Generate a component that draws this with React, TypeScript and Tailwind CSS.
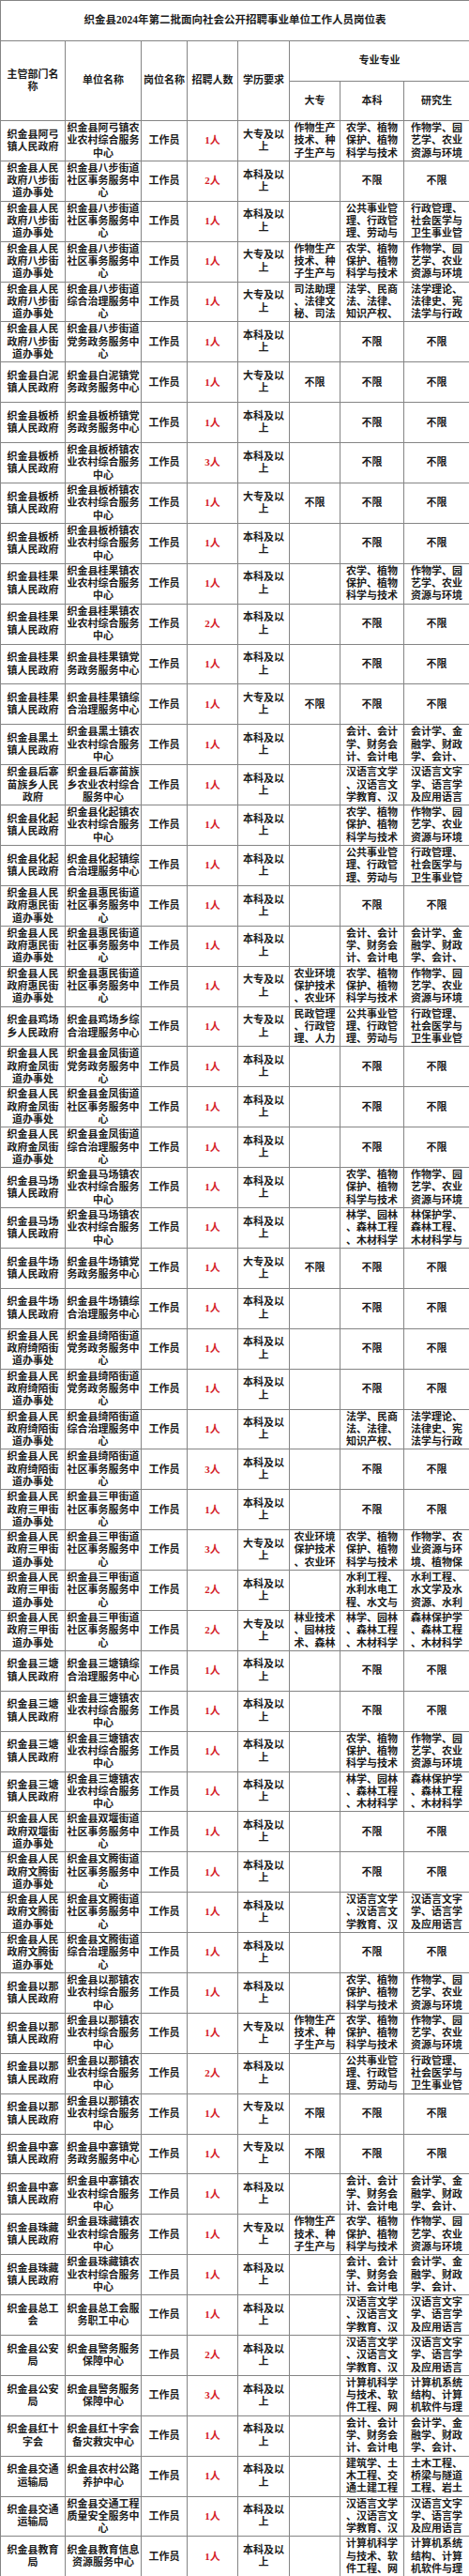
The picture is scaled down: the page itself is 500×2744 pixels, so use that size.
const BX = "不限";

// 专业 groups: [大专, 本科, 研究生]
const NX_D = "作物生产\n技术、种\n子生产与";
const NX_B = "农学、植物\n保护、植物\n科学与技术";
const NX_G = "作物学、园\n艺学、农业\n资源与环境";
const GG_D = "民政管理\n、行政管\n理、人力";
const GG_B = "公共事业管\n理、行政管\n理、劳动与";
const GG_G = "行政管理、\n社会医学与\n卫生事业管";
const FX_D = "司法助理\n、法律文\n秘、司法";
const FX_B = "法学、民商\n法、法律、\n知识产权、";
const FX_G = "法学理论、\n法律史、宪\n法学与行政";
const KJ_B = "会计、会计\n学、财务会\n计、会计电";
const KJ_G = "会计学、金\n融学、财政\n学、会计、";
const HY_B = "汉语言文学\n、汉语言文\n学教育、汉";
const HY_G = "汉语言文字\n学、语言学\n及应用语言";
const NH_D = "农业环境\n保护技术\n、农业环";
const SJ_G = "作物学、农\n业资源与环\n境、植物保";
const LX_B = "林学、园林\n、森林工程\n、木材科学";
const LX_G1 = "林保护学、\n森林工程、\n木材科学与";
const LX_G2 = "森林保护学\n、森林工程\n、木材科学";
const LY_D = "林业技术\n、园林技\n术、森林";
const SL_B = "水利工程、\n水利水电工\n程、水文与";
const SL_G = "水利工程、\n水文学及水\n资源、水利";
const JS_B = "计算机科学\n与技术、软\n件工程、网";
const JS_G = "计算机系统\n结构、计算\n机软件与理";
const TM_B = "建筑学、土\n木工程、交\n通土建工程";
const TM_G = "土木工程、\n桥梁与隧道\n工程、岩土";

const town = (t: string) => `织金县${t}\n镇人民政府`;
const street = (t: string) => `织金县人民\n政府${t}街\n道办事处`;
const nongye = (t: string) => `织金县${t}镇农\n业农村综合服务\n中心`;
const shequ = (t: string) => `织金县${t}街道\n社区事务服务中\n心`;
const zongzhi = (t: string) => `织金县${t}街道\n综合治理服务中\n心`;
const dangwu = (t: string) => `织金县${t}街道\n党务政务服务中\n心`;
const zhenDang = (t: string) => `织金县${t}镇党\n务政务服务中心`;
const zhenZong = (t: string) => `织金县${t}镇综\n合治理服务中心`;

const DZ = "大专及以\n上";
const BK = "本科及以\n上";

type Row = [string, string, number, string, string, string, string];

const rows: Row[] = [
  [town("阿弓"), nongye("阿弓"), 1, DZ, NX_D, NX_B, NX_G],
  [street("八步"), shequ("八步"), 2, BK, "", BX, BX],
  [street("八步"), shequ("八步"), 1, BK, "", GG_B, GG_G],
  [street("八步"), shequ("八步"), 1, DZ, NX_D, NX_B, NX_G],
  [street("八步"), zongzhi("八步"), 1, DZ, FX_D, FX_B, FX_G],
  [street("八步"), dangwu("八步"), 1, BK, "", BX, BX],
  [town("白泥"), zhenDang("白泥"), 1, DZ, BX, BX, BX],
  [town("板桥"), zhenDang("板桥"), 1, BK, "", BX, BX],
  [town("板桥"), nongye("板桥"), 3, BK, "", BX, BX],
  [town("板桥"), nongye("板桥"), 1, DZ, BX, BX, BX],
  [town("板桥"), nongye("板桥"), 1, BK, "", BX, BX],
  [town("桂果"), nongye("桂果"), 1, BK, "", NX_B, NX_G],
  [town("桂果"), nongye("桂果"), 2, BK, "", BX, BX],
  [town("桂果"), zhenDang("桂果"), 1, BK, "", BX, BX],
  [town("桂果"), zhenZong("桂果"), 1, DZ, BX, BX, BX],
  [town("黑土"), nongye("黑土"), 1, BK, "", KJ_B, KJ_G],
  ["织金县后寨\n苗族乡人民\n政府", "织金县后寨苗族\n乡农业农村综合\n服务中心", 1, BK, "", HY_B, HY_G],
  [town("化起"), nongye("化起"), 1, BK, "", NX_B, NX_G],
  [town("化起"), zhenZong("化起"), 1, BK, "", GG_B, GG_G],
  [street("惠民"), shequ("惠民"), 1, BK, "", BX, BX],
  [street("惠民"), shequ("惠民"), 1, BK, "", KJ_B, KJ_G],
  [street("惠民"), shequ("惠民"), 1, DZ, NH_D, NX_B, NX_G],
  ["织金县鸡场\n乡人民政府", "织金县鸡场乡综\n合治理服务中心", 1, DZ, GG_D, GG_B, GG_G],
  [street("金凤"), dangwu("金凤"), 1, BK, "", BX, BX],
  [street("金凤"), shequ("金凤"), 1, BK, "", BX, BX],
  [street("金凤"), zongzhi("金凤"), 1, BK, "", BX, BX],
  [town("马场"), nongye("马场"), 1, BK, "", NX_B, NX_G],
  [town("马场"), nongye("马场"), 1, BK, "", LX_B, LX_G1],
  [town("牛场"), zhenDang("牛场"), 1, DZ, BX, BX, BX],
  [town("牛场"), zhenZong("牛场"), 1, BK, "", BX, BX],
  [street("绮陌"), dangwu("绮陌"), 1, BK, "", BX, BX],
  [street("绮陌"), dangwu("绮陌"), 1, BK, "", BX, BX],
  [street("绮陌"), zongzhi("绮陌"), 1, BK, "", FX_B, FX_G],
  [street("绮陌"), shequ("绮陌"), 3, BK, "", BX, BX],
  [street("三甲"), shequ("三甲"), 1, BK, "", BX, BX],
  [street("三甲"), shequ("三甲"), 3, DZ, NH_D, NX_B, SJ_G],
  [street("三甲"), shequ("三甲"), 2, BK, "", SL_B, SL_G],
  [street("三甲"), shequ("三甲"), 2, DZ, LY_D, LX_B, LX_G2],
  [town("三塘"), zhenZong("三塘"), 1, BK, "", BX, BX],
  [town("三塘"), nongye("三塘"), 1, BK, "", BX, BX],
  [town("三塘"), nongye("三塘"), 1, BK, "", NX_B, NX_G],
  [town("三塘"), nongye("三塘"), 1, BK, "", LX_B, LX_G2],
  [street("双堰"), shequ("双堰"), 1, BK, "", BX, BX],
  [street("文腾"), shequ("文腾"), 1, BK, "", BX, BX],
  [street("文腾"), shequ("文腾"), 1, BK, "", HY_B, HY_G],
  [street("文腾"), zongzhi("文腾"), 1, BK, "", BX, BX],
  [town("以那"), nongye("以那"), 1, BK, "", NX_B, NX_G],
  [town("以那"), nongye("以那"), 1, DZ, NX_D, NX_B, NX_G],
  [town("以那"), nongye("以那"), 2, BK, "", GG_B, GG_G],
  [town("以那"), nongye("以那"), 1, DZ, BX, BX, BX],
  [town("中寨"), zhenDang("中寨"), 1, DZ, BX, BX, BX],
  [town("中寨"), nongye("中寨"), 1, BK, "", KJ_B, KJ_G],
  [town("珠藏"), nongye("珠藏"), 1, DZ, NX_D, NX_B, NX_G],
  [town("珠藏"), nongye("珠藏"), 1, BK, "", KJ_B, KJ_G],
  ["织金县总工\n会", "织金县总工会服\n务职工中心", 1, BK, "", HY_B, HY_G],
  ["织金县公安\n局", "织金县警务服务\n保障中心", 2, BK, "", HY_B, HY_G],
  ["织金县公安\n局", "织金县警务服务\n保障中心", 3, BK, "", JS_B, JS_G],
  ["织金县红十\n字会", "织金县红十字会\n备灾救灾中心", 1, BK, "", KJ_B, KJ_G],
  ["织金县交通\n运输局", "织金县农村公路\n养护中心", 1, BK, "", TM_B, TM_G],
  ["织金县交通\n运输局", "织金县交通工程\n质量安全服务中\n心", 1, BK, "", HY_B, HY_G],
  ["织金县教育\n局", "织金县教育信息\n资源服务中心", 1, BK, "", JS_B, JS_G],
];

const cell =
  "flex items-center justify-center overflow-hidden border-r border-b border-[#858585] text-center whitespace-pre";

function Cell({ text, className = "" }: { text: string; className?: string }) {
  return (
    <div className={`${cell} h-[42.9px] ${className}`}>
      <span>{text}</span>
    </div>
  );
}

export default function App() {
  return (
    <div className="w-[500px] bg-white text-[#1c1c1c] font-['Liberation_Serif','Noto_Sans_CJK_SC',serif] font-bold text-[11px] leading-[13.3px]">
      <div className="grid grid-cols-[69px_81px_49px_54px_55px_54px_68px_70px] border-l border-t border-[#858585]">
        <div className={`${cell} col-span-8 h-[43px] text-[11.5px]`}>
          织金县2024年第二批面向社会公开招聘事业单位工作人员岗位表
        </div>

        <div className={`${cell} row-span-2`}><span>{"主管部门名\n称"}</span></div>
        <div className={`${cell} row-span-2`}>单位名称</div>
        <div className={`${cell} row-span-2`}>岗位名称</div>
        <div className={`${cell} row-span-2`}>招聘人数</div>
        <div className={`${cell} row-span-2`}>学历要求</div>
        <div className={`${cell} col-span-3 h-[43px]`}>专业专业</div>
        <div className={`${cell} h-[42px]`}>大专</div>
        <div className={`${cell} h-[42px]`}>本科</div>
        <div className={`${cell} h-[42px]`}>研究生</div>

        {rows.map((r, i) => (
          <div key={i} className="contents">
            <Cell text={r[0]} />
            <Cell text={r[1]} />
            <Cell text="工作员" />
            <Cell text={`${r[2]}人`} className="text-[#d42027]" />
            <Cell text={r[3]} />
            <Cell text={r[4]} />
            <Cell text={r[5]} />
            <Cell text={r[6]} />
          </div>
        ))}
      </div>
    </div>
  );
}
